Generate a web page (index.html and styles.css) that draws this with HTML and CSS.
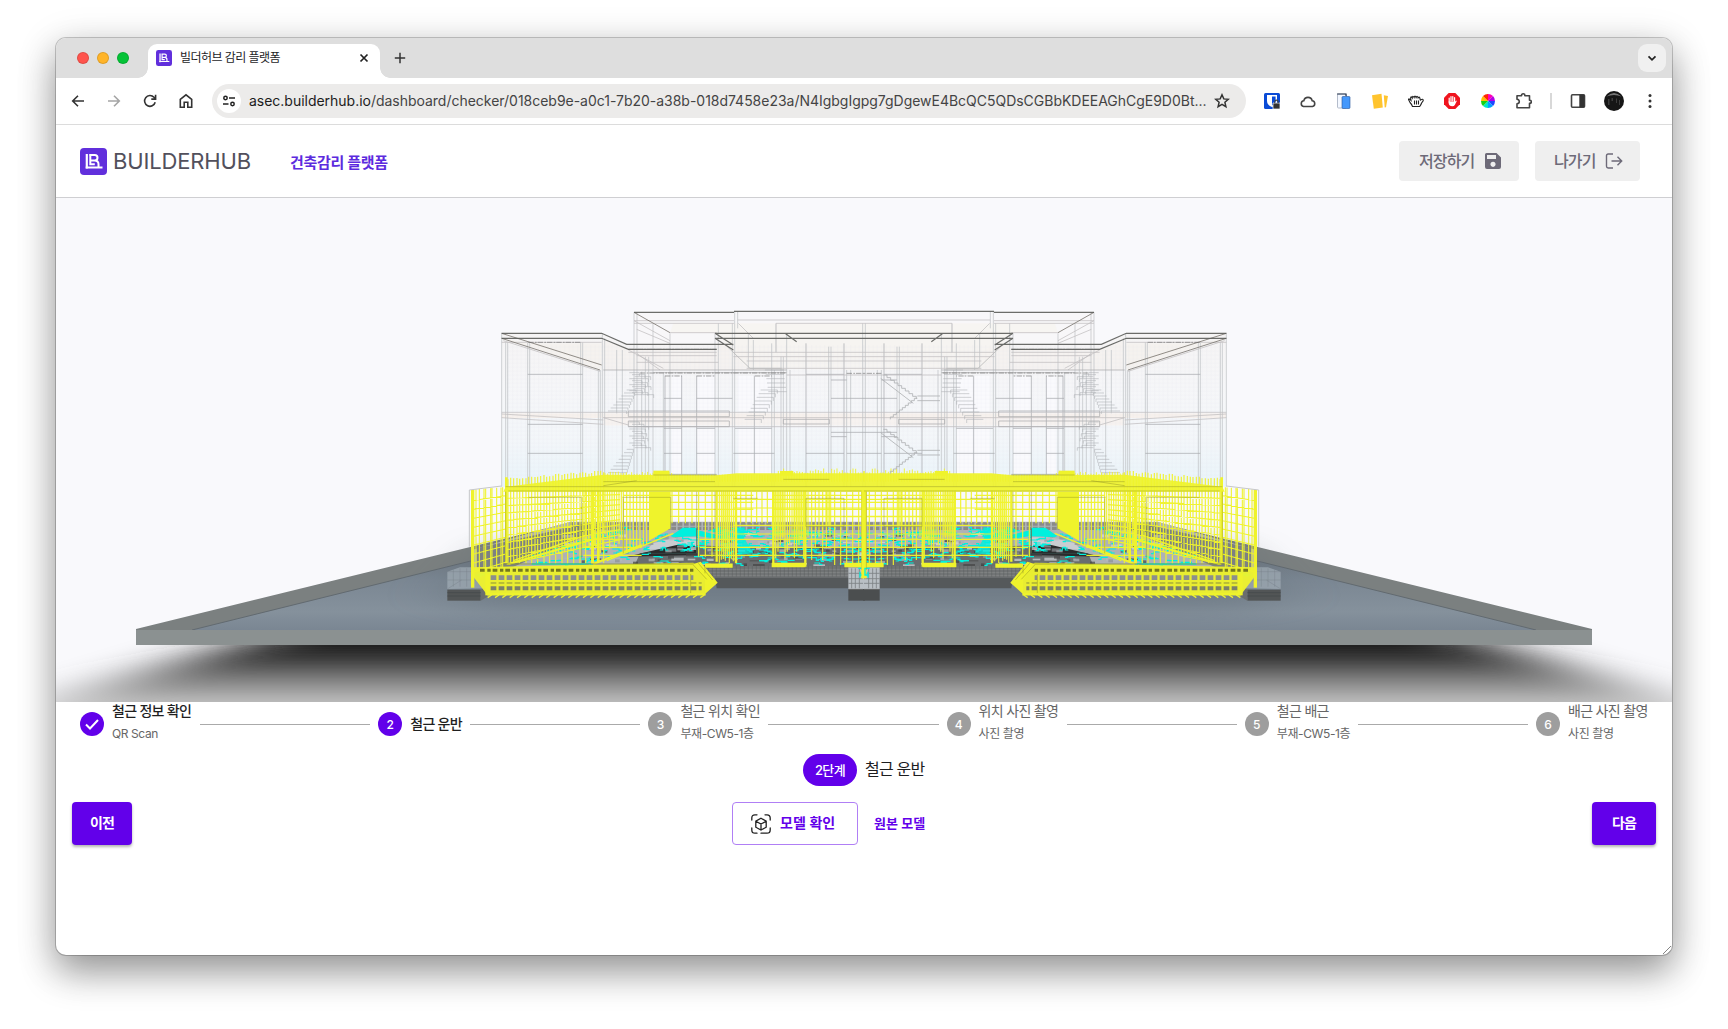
FILE: index.html
```html
<!DOCTYPE html>
<html lang="ko">
<head>
<meta charset="utf-8">
<title>빌더허브 감리 플랫폼</title>
<link rel="stylesheet" href="styles.css">
</head>
<body>
<svg class="defs" width="0" height="0">
  <symbol id="mark" viewBox="0 0 27 27">
    <rect width="27" height="27" rx="4" fill="#612fdc"/>
    <path d="M6.800 6v14.500" fill="none" stroke="#fff" stroke-width="2.200"/>
    <path d="M9.200 7.100h5.600q2.700 0 2.700 2.700t-2.700 2.700H10.300V7.100M14.500 12.600q4 0 4 3.700v3M5.700 19.400H22.500M10.300 12.500v3.700h4.500" fill="none" stroke="#fff" stroke-width="2"/>
  </symbol>
</svg>
<div class="window">
  <div class="tabstrip">
    <div class="lights"><i class="red"></i><i class="amber"></i><i class="green"></i></div>
    <div class="tab">
      <svg width="16" height="16"><use href="#mark"/></svg>
      <span class="tab-title">빌더허브 감리 플랫폼</span>
      <svg class="tab-close" width="10" height="10" viewBox="0 0 10 10"><path d="M1.500 1.500l7 7M8.500 1.500l-7 7"/></svg>
    </div>
    <svg class="plus" width="12" height="12" viewBox="0 0 12 12"><path d="M6 .8v10.400M.8 6h10.400"/></svg>
    <div class="tab-search"><svg width="10" height="7" viewBox="0 0 10 7"><path d="M1.500 1.300L5 4.800l3.500-3.500"/></svg></div>
  </div>

  <div class="toolbar">
    <div class="nav">
      <svg viewBox="0 0 16 16"><path d="M14 8H3M8 2.700L2.700 8 8 13.300"/></svg>
      <svg class="off" viewBox="0 0 16 16"><path d="M2 8h11M8 2.700L13.300 8 8 13.300"/></svg>
      <svg viewBox="0 0 16 16"><path d="M13.200 9.300A5.400 5.400 0 1 1 12 4.300l1.300 1.400M13.600 1.800v4.300H9.300"/></svg>
      <svg viewBox="0 0 16 16"><path d="M2.300 6.300v7.900h3.900V9.300h3.600v4.900h3.900V6.300L8 1.800z"/></svg>
    </div>
    <div class="omnibox">
      <span class="site"><svg width="14" height="12" viewBox="0 0 14 12"><circle cx="3.500" cy="3" r="1.700"/><path d="M7 3h6M1 9h5.500"/><circle cx="10.500" cy="9" r="1.700"/></svg></span>
      <span class="url"><b>asec.builderhub.io</b>/dashboard/checker/018ceb9e-a0c1-7b20-a38b-018d7458e23a/N4IgbgIgpg7gDgewE4BcQC5QDsCGBbKDEEAGhCgE9D0Bt...</span>
      <svg class="star" width="16" height="16" viewBox="0 0 16 16"><path d="M8 1.800l1.800 4.100 4.500.400-3.400 3 1 4.400L8 11.400l-3.900 2.300 1-4.400-3.400-3 4.500-.400z"/></svg>
    </div>
    <div class="ext">
      <svg viewBox="0 0 16 16"><rect width="16" height="16" rx="1.500" fill="#0a4bd6"/><path d="M3 2h10v6q0 4-5 6-5-2-5-6z" fill="#fff"/><path d="M8 3.500h3.600V8Q11.500 11 8 12.500z" fill="#0a4bd6"/><path d="M9 10h7v6H9z" fill="#333" stroke="#fff" stroke-width=".7"/><path d="M10.800 10V8.800a1.700 1.700 0 0 1 3.400 0V10" fill="none" stroke="#444" stroke-width="1.200"/></svg>
      <svg viewBox="0 0 16 16"><path class="ln" d="M3.500 13.500a2.900 2.900 0 0 1 .3-5.700 4.300 4.300 0 0 1 8.400 0 2.900 2.900 0 0 1 .3 5.700z"/></svg>
      <svg viewBox="0 0 16 16"><rect x="1.500" y="1" width="9" height="14" rx="1" fill="#f4f8ff" stroke="#b4bccb"/><path d="M1 1h9v2" fill="none" stroke="#29364f" stroke-width="1.200"/><rect x="6" y="3.500" width="8" height="12" rx="1" fill="#4498fc" stroke="#27559b" stroke-width=".6"/></svg>
      <svg viewBox="0 0 16 16"><path d="M0 2.300L9.500.800l1.300 13.700-9 1.200z" fill="#ffc42e"/><path d="M11.800 2.200l4.200.7-2 11.300-1.300.2z" fill="#ffc42e"/></svg>
      <svg viewBox="0 0 16 16"><path d="M4.500 13.500q-.5-2-2.500-4L.5 6.500Q.8 5 3 7.300L2.600 5q.2-2.300 1.700 0 .2-3.300 1.800-.4.800-3 2 0 1.300-2.500 2 .3 1.800-1.900 1.800.8l.5 1.400q3-2 2.800.6l-1.600 2.300q-.5 1.500-1.900 3.500zM6.500 7.500v4M8.500 7.500v4M10.500 7.500v4" fill="#fff" stroke="#222" stroke-width="1.100"/></svg>
      <svg viewBox="0 0 16 16"><path d="M4.700 0h6.600L16 4.700v6.600L11.300 16H4.700L0 11.300V4.700z" fill="#f0141e"/><path d="M5.200 9V5M7 8V3.500M8.800 8V3.500M10.600 9V4.700" stroke="#fff" stroke-width="1.200" stroke-linecap="round"/><path d="M4.600 8.500h6.600l1-1 .6.500-2 4q-.8 1.300-2.500 1.300Q5 13.200 4.600 10z" fill="#fff"/></svg>
      <svg viewBox="0 0 16 16"><path d="M8 8V1a7 7 0 0 1 5 2z" fill="#ff00b4"/><path d="M8 8l5-5a7 7 0 0 1 2 5z" fill="#b400e6"/><path d="M8 8h7a7 7 0 0 1-2 5z" fill="#1e46ff"/><path d="M8 8l5 5a7 7 0 0 1-5 2z" fill="#00a0ff"/><path d="M8 8v7a7 7 0 0 1-5-2z" fill="#00e6c8"/><path d="M8 8l-5 5a7 7 0 0 1-2-5z" fill="#14d214"/><path d="M8 8H1a7 7 0 0 1 2-5z" fill="#ffbe00"/><path d="M8 8L3 3a7 7 0 0 1 5-2z" fill="#ff2800"/></svg>
      <svg viewBox="0 0 16 16"><path class="ln" d="M1 2.700h4.500q0-1.900 1.700-1.900t1.700 1.900h4.600v4.500q1.900 0 1.900 1.600t-1.900 1.600v4.400H1v-3.900q2.300-.300 2.300-2.300T1 6.300z"/></svg>
      <span class="sep"></span>
      <svg viewBox="0 0 16 16"><rect class="ln" x="1.500" y="1.700" width="13" height="12.600" rx="1"/><path d="M9.300 1.700h5.200v12.600H9.300z" fill="#333"/></svg>
      <svg class="avatar" viewBox="0 0 20 20"><circle cx="10" cy="10" r="10" fill="#161616"/><path d="M2.500 5.500q7.500-7 15 0Q10 2.500 2.500 5.500z" fill="#777"/><path d="M4 8h1.500v6H4zM7.500 7H9v3H7.500zM12 7.500h1V12h-1zM15 9h1v5h-1z" fill="#3c3c3c"/></svg>
      <svg viewBox="0 0 16 16"><g fill="#333"><circle cx="8" cy="2.500" r="1.500"/><circle cx="8" cy="8" r="1.500"/><circle cx="8" cy="13.500" r="1.500"/></g></svg>
    </div>
  </div>

  <header class="app-bar">
    <svg width="27" height="27"><use href="#mark"/></svg>
    <span class="brand">BUILDERHUB</span>
    <span class="product">건축감리 플랫폼</span>
    <button class="tool save"><span>저장하기</span><svg width="18" height="18" viewBox="0 0 18 18"><path fill-rule="evenodd" d="M2.500 1h10L17 5.500V15a2 2 0 0 1-2 2H3a2 2 0 0 1-2-2V2.500A1.500 1.500 0 0 1 2.500 1zM3 3v4h9V3zM9 9.700a2.600 2.600 0 1 0 .01 0z" fill="#6d6a78"/></svg></button>
    <button class="tool exit"><span>나가기</span><svg width="18" height="18" viewBox="0 0 18 18"><path d="M8 2H3.200Q1.500 2 1.500 3.700v10.600Q1.500 16 3.200 16H8M6.500 9h10M12.500 4.800L16.700 9l-4.200 4.200" fill="none" stroke="#6d6a78" stroke-width="1.400"/></svg></button>
  </header>

  <svg class="viewer" id="viewer" viewBox="56 198 1616 504" width="1616" height="504">
    <defs>
      <linearGradient id="shade" gradientUnits="userSpaceOnUse" x1="0" y1="645" x2="0" y2="702">
        <stop offset="0" stop-color="#1e1e1e"/><stop offset=".25" stop-color="#3c3c3c"/><stop offset=".62" stop-color="#828282"/><stop offset="1" stop-color="#bdbdbd"/>
      </linearGradient>
      <linearGradient id="ground" x1="0" y1="0" x2="0" y2="1"><stop offset="0" stop-color="#5d646b"/><stop offset=".5" stop-color="#7b8793"/><stop offset=".8" stop-color="#85919c"/><stop offset="1" stop-color="#798592"/></linearGradient>
      <linearGradient id="glass" x1="0" y1="0" x2="0" y2="1"><stop offset="0" stop-color="#f5f3f3"/><stop offset=".4" stop-color="#f5f6f8"/><stop offset=".7" stop-color="#f2f6f9"/><stop offset="1" stop-color="#e6f3f9"/></linearGradient>
      <filter id="soft" x="-20%" y="-50%" width="140%" height="200%"><feGaussianBlur stdDeviation="46 5"/></filter>
      <filter id="halo" x="-20%" y="-50%" width="140%" height="200%"><feGaussianBlur stdDeviation="30 10"/></filter>
    </defs>
    <rect x="56" y="198" width="1616" height="504" fill="#f9f9fc"/>
    <polygon points="278,632 1450,632 1740,720 1740,740 -12,740 -12,720" fill="url(#shade)" filter="url(#soft)"/>
    <polygon points="136,630 136,629 572,522 1156,522 1592,629 1592,632 136,632" fill="#7b8080"/>
    <polygon points="192,630 600,529 1128,529 1536,630 1536,632 192,632" fill="url(#ground)"/>
    <path d="M192 630L600 529H1128L1536 630" fill="none" stroke="#626a70"/>
    <polygon points="440,600 500,540 1228,540 1288,600 1228,610 500,610" fill="#59636d" opacity=".35" filter="url(#halo)"/>
    <rect x="136" y="630" width="1456" height="15" fill="#8b9191"/>
    <g id="model" transform="translate(460 290) scale(.333333)"></g>
  </svg>

  <div class="stepper">
    <div class="step s1 done"><span class="dot"><svg width="24" height="24" viewBox="0 0 24 24"><path d="M6 12.500l4 4 8-8.500" fill="none" stroke="#fff" stroke-width="2"/></svg></span><span class="label"><em>철근 정보 확인</em><small>QR Scan</small></span></div><i class="rail"></i>
    <div class="step s2 done"><span class="dot">2</span><span class="label"><em>철근 운반</em></span></div><i class="rail"></i>
    <div class="step s3"><span class="dot">3</span><span class="label"><em>철근 위치 확인</em><small>부재-CW5-1층</small></span></div><i class="rail"></i>
    <div class="step s4"><span class="dot">4</span><span class="label"><em>위치 사진 촬영</em><small>사진 촬영</small></span></div><i class="rail"></i>
    <div class="step s5"><span class="dot">5</span><span class="label"><em>철근 배근</em><small>부재-CW5-1층</small></span></div><i class="rail"></i>
    <div class="step s6"><span class="dot">6</span><span class="label"><em>배근 사진 촬영</em><small>사진 촬영</small></span></div>
  </div>
  <div class="stage"><span class="badge">2단계</span><span class="stage-title">철근 운반</span></div>
  <div class="actions">
    <button class="solid prev">이전</button>
    <div class="models">
      <button class="outlined"><svg width="20" height="20" viewBox="0 0 20 20"><g fill="none" stroke="#222" stroke-width="1.300" stroke-linecap="round"><path d="M.8 6V4Q.8.800 4 .800h2M14 .8h2q3.200 0 3.200 3.200v2M19.200 14v2q0 3.200-3.200 3.200h-6M6 19.200H4Q.8 19.200.8 16v-2"/><path d="M10 4.300l5.200 2.900v6L10 16l-5.200-2.800v-6zM4.800 7.200L10 10l5.200-2.800M10 10v6"/></g></svg><span>모델 확인</span></button>
      <span class="link">원본 모델</span>
    </div>
    <button class="solid next">다음</button>
  </div>
  <svg class="grip" width="8" height="8" viewBox="0 0 8 8"><path d="M0 8L8 0M4 8l4-4" stroke="#666" stroke-width=".8"/></svg>
</div>
<script src="script.js"></script>
</body>
</html>
```
FILE: styles.css
```css
* { box-sizing: border-box; }
body {
  margin: 0; width: 1728px; height: 1029px; overflow: hidden; background: #fff; padding: 38px 56px;
  font-family: Inter, "Noto Sans CJK KR", sans-serif; color: #1d1d1f;
}
svg { display: block; flex: none; }
.defs { position: absolute; }
button { font: inherit; border: 0; margin: 0; padding: 0; }
.window {
  position: relative; width: 1616px; height: 917px; border-radius: 10px; overflow: hidden; background: #fff;
  display: flex; flex-direction: column;
  box-shadow: 0 0 0 1px rgba(0,0,0,.2), 0 18px 36px rgba(0,0,0,.32), 0 8px 40px rgba(0,0,0,.17);
}
.tabstrip { height: 40px; flex: none; background: #dedede; display: flex; align-items: flex-end; }
.lights { display: flex; gap: 8px; padding: 0 19px 14px 21px; }
.lights i { width: 12px; height: 12px; border-radius: 50%; border: 1px solid rgba(0,0,0,.12); }
.red { background: #ff544d; } .amber { background: #ffb429; } .green { background: #05c337; }
.tab {
  position: relative; width: 232px; height: 34px; background: #fff; border-radius: 9px 9px 0 0;
  display: flex; align-items: center; padding: 0 11px 6px 8px;
}
.tab::before, .tab::after { content: ""; position: absolute; bottom: 0; width: 10px; height: 10px; }
.tab::before { left: -10px; background: radial-gradient(circle at 0 0, transparent 9.500px, #fff 10px); }
.tab::after { right: -10px; background: radial-gradient(circle at 100% 0, transparent 9.500px, #fff 10px); }
.tab-title { margin-left: 8px; font-size: 12px; line-height: 16px; letter-spacing: -.55px; flex: 1; white-space: nowrap; }
.tab-close path, .tab-search path { stroke: #222; stroke-width: 1.700; fill: none; }
.plus { margin: 0 0 14px 14px; }
.plus path { stroke: #333; stroke-width: 1.500; }
.tab-search { margin: 0 6px 6px auto; width: 28px; height: 28px; border-radius: 9px; background: #f0f0f0; display: grid; place-items: center; }
.toolbar {
  height: 47px; flex: none; border-bottom: 1px solid #dcdcdc; display: flex; align-items: center; background: #fff;
  border-radius: 8px 8px 0 0;
}
.nav { display: flex; gap: 20px; padding-left: 14px; width: 156px; }
.nav svg { width: 16px; height: 16px; fill: none; stroke: #333; stroke-width: 1.600; }
.nav .off { stroke: #a5a5a5; }
.omnibox { width: 1034px; height: 34px; border-radius: 17px; background: #ecebea; display: flex; align-items: center; padding: 0 16px 0 5px; }
.site { width: 24px; height: 24px; border-radius: 50%; background: #fff; display: grid; place-items: center; }
.site svg { fill: none; stroke: #222; stroke-width: 1.500; }
.url { margin-left: 8px; width: 960px; font-size: 14px; line-height: 20px; letter-spacing: -.02px; color: #444; white-space: nowrap; }
.url b { font-weight: 400; color: #1c1c1c; }
.star { margin-left: auto; fill: none; stroke: #333; stroke-width: 1.500; }
.ext { display: flex; align-items: center; gap: 20px; padding-left: 18px; }
.ext svg { width: 16px; height: 16px; }
.ext .ln { fill: none; stroke: #444; stroke-width: 1.600; stroke-linejoin: round; }
.sep { width: 2px; height: 16px; background: #d8d8d8; margin: 0 -2px; }
.ext .avatar { width: 20px; height: 20px; margin: 0 -2px; }
.app-bar { height: 73px; flex: none; border-bottom: 1px solid #cfcfd2; display: flex; align-items: center; padding: 0 32px 0 24px; }
.brand { margin-left: 6px; width: 177px; font-size: 22px; line-height: 28px; letter-spacing: -.15px; color: #52505c; }
.product { font-size: 15px; font-weight: 700; letter-spacing: -.3px; color: #5c2bde; margin-right: auto; }
.tool {
  height: 40px; border-radius: 4px; background: #efefef; color: #6d6a78; font-size: 16px; font-weight: 500; letter-spacing: -.9px;
  display: flex; align-items: center; justify-content: space-between; white-space: nowrap;
}
.tool span { padding-bottom: 3px; }
.save { width: 120px; padding: 0 17px 0 20px; margin-right: 16px; }
.exit { width: 105px; padding: 0 17px 0 19px; }
.viewer { width: 1616px; height: 504px; }
.stepper { height: 44px; flex: none; display: flex; align-items: center; padding: 0 24px; }
.step { display: flex; align-items: center; gap: 8px; flex: none; white-space: nowrap; }
.dot { width: 24px; height: 24px; flex: none; border-radius: 50%; background: #9e9e9e; color: #fff; display: grid; place-items: center; font-size: 12px; font-weight: 500; }
.done .dot { background: #6200ea; }
.label { display: flex; flex-direction: column; gap: 3px; color: #666; }
.label:has(small) { padding-bottom: 3px; }
.label em { font-style: normal; font-size: 14px; line-height: 20px; letter-spacing: -.7px; }
.label small { font-size: 12px; line-height: 20px; letter-spacing: -.4px; color: #666; }
.done em { color: #1f1f1f; font-weight: 500; }
.s1, .s3, .s4, .s6 { width: 112px; } .s2 { width: 84px; } .s5 { width: 105px; }
.rail { flex: 1; height: 1px; background: #aaa; margin: 0 8px; }
.stage { margin-top: 8px; height: 32px; display: flex; justify-content: center; align-items: center; gap: 8px; }
.badge { width: 54px; height: 32px; border-radius: 16px; background: #6200ea; color: #fff; font-size: 13px; font-weight: 500; letter-spacing: -.6px; display: grid; place-items: center; padding-bottom: 1px; }
.stage-title { font-size: 16px; letter-spacing: -.8px; width: 60px; white-space: nowrap; line-height: 28px; padding-bottom: 2px; }
.actions { margin-top: 16px; height: 43px; padding: 0 16px; display: grid; grid-template-columns: 60px 1fr 64px; }
.solid { background: #6200ea; color: #fff; font-size: 14px; font-weight: 700; letter-spacing: -.8px; border-radius: 4px; box-shadow: 0 2px 3px rgba(0,0,0,.3); padding-bottom: 3px; }
.models { display: flex; align-items: center; padding-left: 600px; gap: 16px; color: #6200ea; font-weight: 700; }
.outlined { width: 126px; height: 43px; border: 1px solid #b07ff5; border-radius: 4px; background: #fff; color: #6200ea; font-size: 14px; letter-spacing: .1px; display: flex; align-items: center; padding-left: 18px; gap: 9px; white-space: nowrap; }
.outlined span, .link { padding-bottom: 3px; }
.link { font-size: 13px; letter-spacing: .1px; white-space: nowrap; }
.grip { position: absolute; right: 1px; bottom: 1px; }
```
FILE: script.js
```js
// Builds the wireframe building and its reinforcement. Symmetric parts are
// described for the left side of the axis (x = 1212) and mirrored.
(function () {
  var seed = 11;
  function rnd() { seed = (seed * 16807) % 2147483647; return seed / 2147483647; }
  function path(d, stroke, w, o, extra) {
    return '<path d="' + d + '" fill="none" stroke="' + stroke + '" stroke-width="' + w + '" opacity="' + (o || 1) + '" ' + (extra || '') + '/>';
  }
  function poly(p, fill, o) { return '<polygon points="' + p + '" fill="' + fill + '" opacity="' + (o || 1) + '"/>'; }
  function rect(x, y, w, h, fill, o) { return '<rect x="' + x + '" y="' + y + '" width="' + w + '" height="' + h + '" fill="' + fill + '" opacity="' + (o || 1) + '"/>'; }
  function V(list) { return list.map(function (a) { return 'M' + a[0] + ' ' + a[1] + 'V' + a[2]; }).join(''); }
  function H(list) { return list.map(function (a) { return 'M' + a[0] + ' ' + a[1] + 'H' + a[2]; }).join(''); }
  var Y = '#eff32c', C = '#00f0de', s = '', i, x, y, d;

  // translucent walls and slabs
  s += poly('125,130 425,130 500,163 770,163 770,130 1212,130 1212,590 125,590', 'url(#glass)', .85);
  s += poly('522,67 822,64 1212,64 1212,130 770,130 770,163 522,163', '#f7f6f7', .8);
  s += poly('130,145 205,160 425,160 425,240', '#f5f1ee', .8) + poly('430,150 505,180 770,180 770,165 820,165 975,240 430,240', '#f5f1ee', .7);
  s += poly('640,100 1212,100 1212,240 860,235 770,128 630,128', '#f7f3f0', .7);
  s += rect(125, 370, 1087, 14, '#f7f1ed') + rect(430, 384, 782, 22, '#f7f1ed', .8);
  [[635, 258, 30], [712, 258, 52], [835, 258, 48], [885, 258, 48]].forEach(function (r) {
    s += rect(r[0], r[1], r[2], 105, '#fafafd') + rect(r[0], 416, r[2], 135, '#fafafd');
  });
  d = '';
  for (x = 145; x < 1212; x += 13) d += 'M' + x + ' 165V590';
  for (y = 172; y < 590; y += 12) d += 'M140 ' + y + 'H1212';
  s += path(d, '#dfe5ea', 1, .3);

  // wall, window and slab edges
  s += path(V([[125, 130, 590], [137, 157, 590], [143, 157, 590], [203, 157, 590], [209, 157, 590], [362, 157, 590], [368, 157, 590],
    [415, 240, 590], [421, 240, 590], [427, 130, 590], [434, 145, 590], [470, 180, 370], [487, 180, 555], [522, 67, 570], [531, 67, 570], [545, 245, 555],
    [556, 200, 555], [566, 200, 555], [579, 100, 555], [610, 250, 555], [630, 130, 555], [765, 130, 590], [775, 100, 590], [817, 100, 590], [824, 64, 590],
    [833, 64, 115], [865, 130, 235], [880, 150, 240], [935, 160, 590], [943, 240, 590], [963, 200, 555], [970, 200, 555], [980, 130, 555], [990, 240, 555],
    [1106, 170, 570], [1113, 170, 570], [1160, 240, 590], [1172, 240, 590], [1208, 100, 590]]), '#c4c6ca', 3, .8);
  s += path(V([[615, 257, 553], [665, 257, 553], [710, 257, 553], [883, 257, 553], [1038, 160, 590], [1152, 160, 590], [948, 100, 187]]) +
    H([[203, 253, 368], [203, 403, 368], [203, 490, 368], [612, 325, 665], [710, 325, 817], [612, 415, 665], [710, 415, 765], [825, 415, 935],
      [612, 490, 665], [710, 490, 765], [820, 490, 943], [1038, 253, 1152], [1038, 490, 1152], [1113, 270, 1160], [1113, 325, 1212], [1113, 427, 1212],
      [1113, 440, 1160], [1160, 490, 1212], [580, 553, 770]]), '#a9abb0', 2.500, .9);
  s += path(H([[125, 367, 430], [125, 157, 425], [522, 92, 822], [522, 100, 822], [630, 128, 770], [948, 100, 1212], [833, 90, 1212], [530, 197, 770], [530, 217, 775],
    [505, 187, 770], [820, 187, 1212], [820, 200, 1212], [860, 213, 1212], [860, 235, 1212], [430, 367, 1212], [430, 383, 1212], [505, 410, 1212], [980, 255, 1212]]) +
    'M125 383L430 403M125 372L430 390M430 383L505 405M522 92L630 152M530 118L630 160M835 100L880 145M130 152L420 244M505 180L610 235M530 190L600 240', '#c2bfc0', 2.500, .9);
  s += path('M505 363H808V380H505ZM505 393H808V410H505ZM970 388H1108V402H970ZM430 240H980M580 248H980', '#acacae', 2.500, .9);
  s += path('M800 168L870 235H965', '#bbb', 2.500) + path('M125 130L425 225M125 145L420 240M522 67L630 128', '#7d7873', 3, .85);
  s += path('M125 130H425L500 163H820M125 145H425L505 178H770M522 67H822M822 64H1212M765 130H1212M765 145H1212M765 130L820 165M765 145L820 180M975 130L1010 155', '#5c5d5a', 3.500, .9);
  s += path('M205 157H365M505 178H770M540 249H980M615 258H665M710 258H765M885 258H935M1160 250H1212', '#666', 2.500, .7, 'stroke-dasharray="16 4 5 3"');

  // spiral and flight stairs
  d = '';
  for (i = 0; i < 8; i++) {
    x = 500 - i * 8;
    d += 'M' + x + ' ' + (300 + i * 9) + 'h' + (28 + i * 4) + 'v9';
    d += 'M' + x + ' ' + (478 + i * 10) + 'h' + (20 + i * 5) + 'v10';
  }
  for (i = 0; i < 12; i++) d += 'M' + (508 + i % 3 * 8) + ' ' + (248 + i * 6) + 'h' + (30 + i % 4 * 9) + 'v10M' + (508 + i % 3 * 8) + ' ' + (396 + i * 7) + 'h' + (30 + i % 4 * 6) + 'v9';
  for (i = 0; i < 9; i++) d += 'M' + (902 - i * 6) + ' ' + (300 + i * 11) + 'h50v11';
  for (i = 0; i < 6; i++) d += 'M' + (915 + i * 2) + ' ' + (240 + i * 13) + 'h55';
  s += path(d, '#a8acaf', 2, .8);

  // floor inside the building
  s += poly('35,780 330,695 1212,695 1212,835 35,835', '#aeb2b6');
  s += path('M330 702H1212M330 715H1212', '#7f7f7f', 10, .8, 'stroke-dasharray="14 5"');
  s += poly('50,775 380,700 430,715 150,835 50,835', '#777a7c', .9);
  s += poly('540,790 700,765 900,775 1212,770 1212,835 520,835', '#5d6063', .85);
  s += poly('580,760 650,742 712,742 712,768 560,780', '#c9cdd1');
  s += poly('500,800 650,765 712,770 712,795', '#2a2b2c');
  for (i = 0; i < 150; i++) {
    x = 300 + rnd() * 900; y = 725 + rnd() * 100;
    s += rect(x.toFixed(0), y.toFixed(0), (8 + rnd() * 30).toFixed(0), (3 + rnd() * 8).toFixed(0), ['#444', '#d5dadd', '#8d9296', '#b4b9bd'][i % 4], .7);
  }

  // foundation beam and footings
  s += rect(735, 828, 432, 36, '#707374') + path(H([[740, 838, 1165], [740, 848, 1165], [760, 856, 1165]]), '#8f9394', 2, .8);
  d = ''; for (x = 745; x < 1165; x += 12) d += 'M' + x + ' 828V860';
  s += path(d, '#565a5c', 2, .6) + poly('765,863 1167,863 1167,895 770,895', '#55595b');
  s += rect(1165, 832, 50, 65, '#b9bfc4') + path('M1175 835V895M1186 835V895M1198 835V895M1165 850H1212M1165 866H1212M1165 880H1212', '#7d8184', 2.500);
  s += rect(1165, 897, 50, 35, '#4b4e4f') + path('M1165 898H1212', '#777', 2);
  s += poly('-38,845 0,832 82,832 82,895 -38,897', '#a9b4bc', .6) + path('M-38 845H70M-38 870H70M-20 840V890M0 835V890M20 835V890M-38 897L5 870', '#737c83', 2, .5);
  s += rect(-38, 899, 100, 33, '#525556') + poly('62,899 82,890 82,920 62,932', '#6b6e6e');
  s += path('M-38 908H62M-38 918H62', '#43484a', 2);

  // floor rebar in cyan
  s += poly('632,738 668,713 710,713 710,738 640,742', C) + poly('830,712 855,712 850,740 880,790 835,795', C, .8) + poly('712,720 770,735 760,745 712,738', C);
  d = '';
  for (i = 0; i < 230; i++) {
    y = 715 + rnd() * 108; x = (i % 3 ? 700 + rnd() * 510 : 200 + (825 - y) * 2.200 + rnd() * 430);
    d += 'M' + x.toFixed(0) + ' ' + y.toFixed(0) + 'h' + (8 + rnd() * 20).toFixed(0) + 'v' + (rnd() * 16 - 8).toFixed(0) + 'h8';
  }
  for (i = 0; i < 13; i++) d += 'M' + (215 + i * 23) + ' ' + (805 - i * 7) + 'v-8h10v6h14';
  s += path(d, C, 3.500) + path('M50 855h30v-8h14M62 862v-10h12M215 822H380M490 826H610', C, 4);

  // wall rebar: outer panel, receding side wall
  d = '';
  [48, 58, 72, 77, 92, 96, 110, 123, 128].forEach(function (q) { d += 'M' + q + ' ' + (602 - q * .08) + 'V' + (845 - q * .1); });
  for (i = 0; i < 9; i++) d += 'M33 ' + (632 + i * 27) + 'L137 ' + (617 + i * 25);
  s += path(d, Y, 3.200) + path('M38 600V893', Y, 10);
  d = '';
  for (i = 0, x = 144; x < 435; x += 8 + (i % 3), i++) d += 'M' + x + ' ' + (563 - (x - 137) * .08 + rnd() * 8).toFixed(0) + 'V' + (820 - (x - 140) * .2 * (i % 2)).toFixed(0);
  for (i = 0; i < 10; i++) d += 'M140 ' + (625 + i * 22) + 'L480 ' + (614 + i * 15);
  s += path(d, Y, 3.500, .97);
  s += path('M139 562V820M398 600V820M415 600V815', Y, 8) + path('M145 822L410 745M400 822L545 765', Y, 6) + path('M440 812L640 730M160 812L380 735', Y, 4);
  // roof-level band of the ground floor
  s += poly('137,590 430,554 770,556 830,550 1212,550 1212,605 130,605', Y, .93);
  d = '';
  for (x = 435; x < 1212; x += 8) d += 'M' + x + ' ' + (x < 640 ? 545 + rnd() * 8 : x > 950 ? 535 + rnd() * 14 : 554) + 'V575';
  s += path(d, Y, 3, .9);
  s += rect(580, 542, 48, 14, Y) + rect(960, 543, 40, 14, Y);
  // inner walls
  d = '';
  for (x = 372; x < 485; x += 7) d += 'M' + x + ' 600V' + (790 - rnd() * 60).toFixed(0);
  for (x = 490; x < 566; x += 10) d += 'M' + x + ' 605V' + (790 - (x - 490) * .4).toFixed(0);
  for (x = 636; x < 775; x += 20) d += 'M' + x + ' 605V' + (x > 710 ? 800 : 700);
  for (x = 778; x < 832; x += 6) d += 'M' + x + ' 600V' + (800 + rnd() * 25).toFixed(0);
  for (x = 842; x < 940; x += 16) d += 'M' + x + ' 605V' + (x % 4 ? 700 : 815);
  for (x = 940; x < 1038; x += 7) d += 'M' + x + ' 600V' + (745 + (x % 4) * 20);
  for (x = 1044; x < 1120; x += 11) d += 'M' + x + ' 605V' + (740 + (x % 3) * 35);
  for (x = 1124; x < 1205; x += 18) d += 'M' + x + ' 605V825';
  for (y = 616; y < 700; y += 21) d += 'M490 ' + y + 'H880M940 ' + y + 'H1212';
  for (y = 628; y < 740; y += 26) d += 'M820 ' + y + 'H1212';
  for (y = 748; y < 820; y += 24) d += 'M720 ' + y + 'H1212M370 ' + y + 'H545';
  s += path(d, Y, 3.500, .97);
  s += rect(942, 605, 32, 135, Y, .55) + rect(1000, 605, 34, 145, Y, .55) + rect(1096, 605, 18, 100, Y, .6) + rect(785, 605, 25, 180, Y, .5);
  s += poly('567,605 632,605 632,715 567,752', Y);
  s += path('M770 600V815M828 600V820M940 600V830M1036 600V830', Y, 7);
  s += path('M735 827H818M935 825H1036M1153 825H1212', Y, 13) + path('M1212 600V865', Y, 15);
  s += path('M1195 835h14v20h-10M1200 845v18', C, 4);

  // strip footing mat
  s += poly('40,832 700,818 735,850 735,915 82,915 40,860', Y, .95);
  s += path('M130 822H715', '#8a8d2b', 2) + path('M60 841H700', '#66691e', 9, .9, 'stroke-dasharray="14 8 10 6"');
  s += path('M92 863H700', '#8b8f8c', 14, 1, 'stroke-dasharray="17 7"') + path('M92 895H725', '#7c8068', 12, 1, 'stroke-dasharray="17 7"');
  s += path('M92 879H725', '#8c8f3a', 3, 1, 'stroke-dasharray="17 7"');
  s += poly('700,822 722,815 773,878 735,912 735,870', Y) + path('M700 825L740 868M715 820L758 870M692 852V910M735 830V850', '#a8aa28', 2);
  d = ''; for (x = 95; x < 735; x += 22) d += 'M' + x + ' 915l-12 8';
  s += path(d, Y, 4) + path('M82 913H737', Y, 7);
  s += rect(76, 850, 14, 66, Y);

  // edges seen through the rebar
  s += path('M137 590H1212M145 603H1212M430 575H765M430 587L530 572M137 605V815M205 622H365V805M487 622H632V720M710 605V790M765 605V810M820 625H893M1038 625H1152V710H1038ZM490 625V790M580 555H770M970 568H1108M1205 605V840', '#9b9c26', 2.500, .6);
  s += path('M28 600V770M28 600L125 588', '#c6c7c9', 3);
  s += path('M710 715V790H550', '#3a5a58', 2.500, .7);

  // central staircase, on one side of the axis only
  var stair = '';
  [0, 163].forEach(function (o) {
    stair += 'M1270 ' + (255 + o);
    for (i = 0; i < 9; i++) stair += 'h11v8';
    stair += 'M1262 ' + (265 + o) + 'L1360 ' + (340 + o) + 'M1372 ' + (325 + o);
    for (i = 0; i < 9; i++) stair += 'h-9v7';
    stair += 'M1372 ' + (318 + o) + 'H1440M1372 ' + (332 + o) + 'H1440';
  });
  document.getElementById('model').innerHTML =
    '<g id="half">' + s + '</g><use href="#half" transform="matrix(-1 0 0 1 2424 0)"/>' + path(stair, '#b0b2b5', 2.500);
})();
```
